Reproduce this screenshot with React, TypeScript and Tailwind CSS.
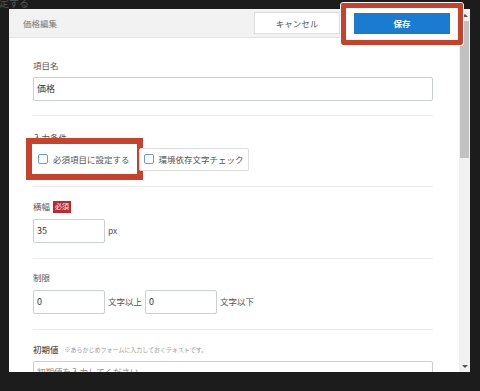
import React from "react";

const inputCls =
  "h-[24px] rounded-[2px] border border-[#c8cde2] bg-white pl-[3px] text-[9px] text-[#333] outline-none";

function Checkbox({ label, bordered = true }: { label: string; bordered?: boolean }) {
  return (
    <div
      className={`relative z-10 flex h-[23px] items-center gap-[5px] rounded-[2px] border bg-white px-[4px] ${
        bordered ? "border-[#dcdcdc]" : "border-transparent"
      }`}
    >
      <span className="h-[10px] w-[10px] rounded-[2px] border border-[#6d9bd6] bg-white" />
      <span className="text-[8.5px] leading-none text-[#555]">{label}</span>
    </div>
  );
}

function Label({ children }: { children: React.ReactNode }) {
  return <div className="flex h-[16px] items-center text-[8.5px] text-[#555]">{children}</div>;
}

export default function App() {
  return (
    <div className="relative h-[391px] w-[480px] overflow-hidden bg-[#1c1c1c] pl-[9px] pt-[9px] font-['Noto_Sans_CJK_JP','Noto_Sans',sans-serif]">
      {/* page behind the modal */}
      <span className="absolute left-[-1px] top-[-5px] text-[10px] text-[#555]">定する</span>

      <div className="flex h-[363px] w-[461px] bg-white">
        <div className="flex min-w-0 flex-1 flex-col">
          <header className="flex h-[29px] shrink-0 items-center border-b border-[#e2e2e2] bg-[#f2f2f2] pl-[14px] pr-[9px]">
            <span className="text-[8.5px] text-[#777]">価格編集</span>
            <div className="ml-auto flex items-center gap-[14px]">
              <button className="h-[22px] w-[86px] border border-[#dddddd] bg-white text-[8.5px] text-[#555]">
                キャンセル
              </button>
              <button className="relative z-10 mt-[1px] h-[21px] w-[96px] bg-[#1b7bd0] text-[8.5px] font-bold text-white">
                保存
              </button>
            </div>
          </header>

          <div className="flex-1 overflow-hidden pl-[24px] pr-[26px]">
            <section className="border-b border-[#ececec] pb-[14px] pt-[19px]">
              <Label>項目名</Label>
              <input className={`${inputCls} mt-[3px] w-full`} defaultValue="価格" readOnly />
            </section>

            <section className="border-b border-[#ececec] pb-[15px] pt-[14px]">
              <Label>入力条件</Label>
              <div className="mt-[2px] flex gap-[4px]">
                <Checkbox label="必須項目に設定する" bordered={false} />
                <Checkbox label="環境依存文字チェック" />
              </div>
            </section>

            <section className="border-b border-[#ececec] pb-[15px] pt-[12px]">
              <Label>
                横幅
                <span className="ml-[3px] flex h-[12px] items-center bg-[#c3262d] px-[2px] text-[7px] text-white">
                  必須
                </span>
              </Label>
              <div className="mt-[4px] flex items-center gap-[3px]">
                <input className={`${inputCls} w-[72px]`} defaultValue="35" readOnly />
                <span className="text-[8.5px] text-[#555]">px</span>
              </div>
            </section>

            <section className="border-b border-[#ececec] pb-[15px] pt-[11px]">
              <Label>制限</Label>
              <div className="mt-[4px] flex items-center gap-[3px]">
                <input className={`${inputCls} w-[72px]`} defaultValue="0" readOnly />
                <span className="text-[8.5px] text-[#555]">文字以上</span>
                <input className={`${inputCls} w-[72px]`} defaultValue="0" readOnly />
                <span className="text-[8.5px] text-[#555]">文字以下</span>
              </div>
            </section>

            <section className="pt-[12px]">
              <Label>
                <span className="font-medium">初期値</span>
                <span className="ml-[6px] text-[6px] text-[#999]">
                  ※あらかじめフォームに入力しておくテキストです。
                </span>
              </Label>
              <textarea
                className="mt-[3px] block h-[40px] w-full resize-none rounded-[2px] border border-[#c8cde2] px-[3px] pt-[3px] text-[8.5px] outline-none placeholder:text-[#888]"
                placeholder="初期値を入力してください"
              />
            </section>
          </div>
        </div>

        {/* scrollbar */}
        <div className="flex w-[11px] flex-col bg-[#f1f1f1]">
          <div className="flex h-[12px] items-center justify-center">
            <span className="h-0 w-0 border-x-[3px] border-b-[3px] border-x-transparent border-b-[#555]" />
          </div>
          <div className="mx-[1px] h-[137px] bg-[#c1c1c1]" />
          <div className="flex-1" />
          <div className="flex h-[12px] items-center justify-center">
            <span className="h-0 w-0 border-x-[3px] border-t-[3px] border-x-transparent border-t-[#555]" />
          </div>
        </div>
      </div>

      {/* annotation boxes */}
      <div className="pointer-events-none absolute left-[341px] top-[3px] z-[5] h-[42px] w-[122px] rounded-[2px] border-[5px] border-[#c8412b] bg-white outline outline-1 outline-white" />
      <div className="pointer-events-none absolute left-[26px] top-[138px] z-[5] h-[42px] w-[117px] border-[6px] border-[#c8412b] bg-white" />
    </div>
  );
}
